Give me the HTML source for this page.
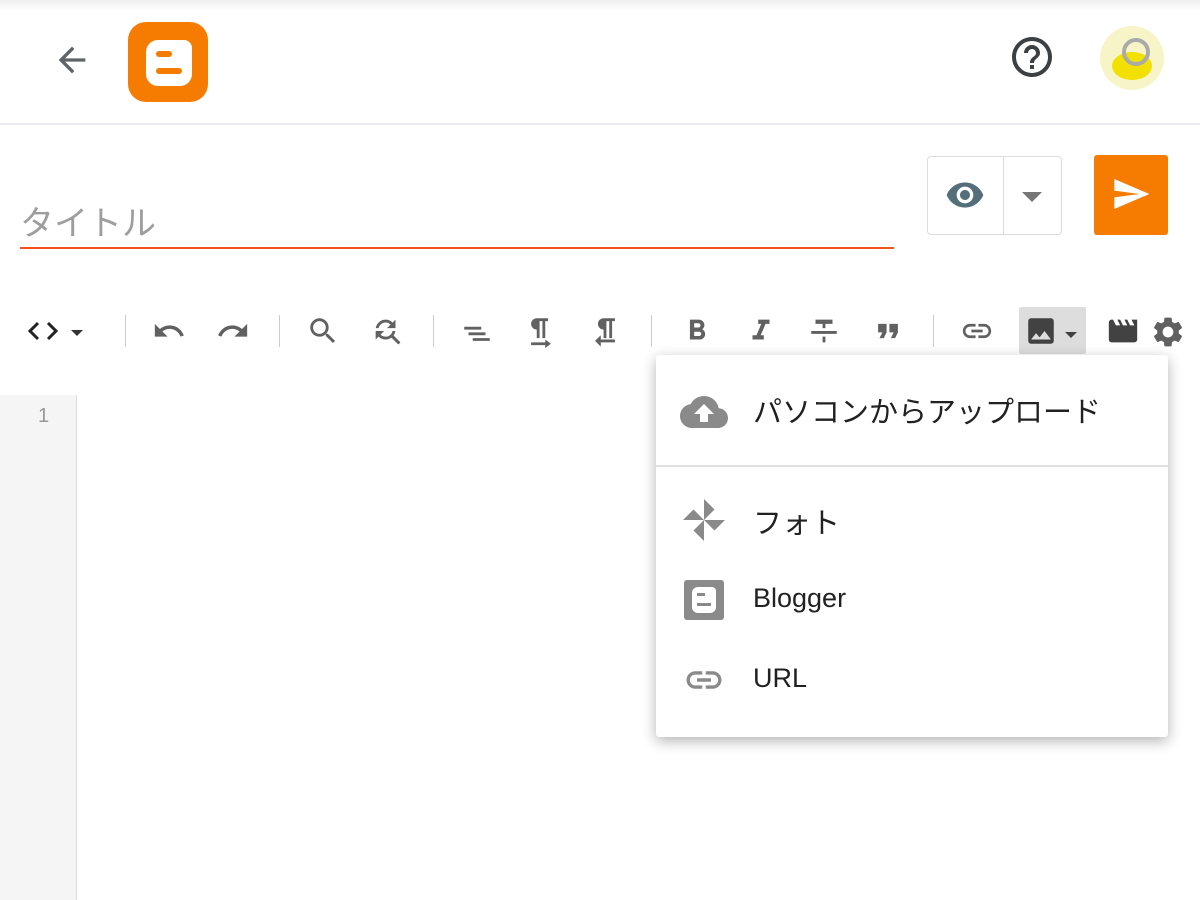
<!DOCTYPE html>
<html><head><meta charset="utf-8"><style>
*{margin:0;padding:0;box-sizing:border-box}
body{width:1200px;height:900px;overflow:hidden;background:#fff;font-family:"Liberation Sans","Noto Sans CJK JP",sans-serif;position:relative}
.a{position:absolute}
.sep{position:absolute;top:315px;width:1px;height:32px;background:#ccc}
.ic{position:absolute;top:314px}
.mi{position:absolute;left:753px;font-size:27px;color:#212121}
</style></head><body>
<div class="a" style="left:0;top:0;width:1200px;height:10px;background:linear-gradient(#eee,#fff)"></div>
<div class="a" style="left:0;top:123px;width:1200px;height:2px;background:#e8eaed"></div>
<svg class="a" style="left:52px;top:40px" width="40" height="40" viewBox="0 0 24 24"><path fill="#5f6368" d="M20 11H7.83l5.59-5.59L12 4l-8 8 8 8 1.41-1.41L7.83 13H20v-2z"/></svg>
<div class="a" style="left:128px;top:22px;width:80px;height:80px;background:#f57c00;border-radius:18px"></div>
<div class="a" style="left:146px;top:40px;width:46px;height:46px;background:#fff;border-radius:12px 8px 12px 12px"></div>
<div class="a" style="left:156px;top:51px;width:16px;height:6px;background:#f57c00;border-radius:3px"></div>
<div class="a" style="left:156px;top:68px;width:26px;height:6px;background:#f57c00;border-radius:3px"></div>
<svg class="a" style="left:1008px;top:33px" width="48" height="48" viewBox="0 0 24 24"><path fill="#3c4043" d="M11 18h2v-2h-2v2zm1-16C6.48 2 2 6.48 2 12s4.48 10 10 10 10-4.48 10-10S17.52 2 12 2zm0 18c-4.41 0-8-3.590-8-8s3.59-8 8-8 8 3.59 8 8-3.59 8-8 8zm0-14c-2.21 0-4 1.79-4 4h2c0-1.1.9-2 2-2s2 .9 2 2c0 2-3 1.75-3 5h2c0-2.250 3-2.5 3-5 0-2.21-1.79-4-4-4z"/></svg>
<div class="a" style="left:1100px;top:26px;width:64px;height:64px;border-radius:50%;background:#f7f5c8"></div>
<div class="a" style="left:1112px;top:52px;width:40px;height:28px;border-radius:50%;background:#f2e000"></div>
<div class="a" style="left:1122px;top:38px;width:28px;height:28px;border-radius:50%;border:4px solid #aaa"></div>
<div class="a" style="left:20px;top:196px;font-size:34px;color:#9e9e9e">タイトル</div>
<div class="a" style="left:20px;top:247px;width:874px;height:2px;background:#f4511e"></div>
<div class="a" style="left:927px;top:156px;width:135px;height:79px;border:1px solid #dadce0;border-radius:4px"></div>
<div class="a" style="left:1003px;top:156px;width:1px;height:79px;background:#dadce0"></div>
<svg class="a" style="left:945px;top:175px" width="40" height="40" viewBox="0 0 24 24"><path fill="#546e7a" d="M12 4.5C7 4.5 2.73 7.61 1 12c1.73 4.39 6 7.5 11 7.5s9.27-3.11 11-7.5c-1.73-4.39-6-7.5-11-7.5zM12 17c-2.76 0-5-2.24-5-5s2.24-5 5-5 5 2.24 5 5-2.24 5-5 5zm0-8c-1.66 0-3 1.34-3 3s1.34 3 3 3 3-1.34 3-3-1.34-3-3-3z"/></svg>
<svg class="a" style="left:1020px;top:190px" width="24" height="14" viewBox="0 0 24 14"><path fill="#757575" d="M2 2h20L12 12z"/></svg>
<div class="a" style="left:1094px;top:155px;width:74px;height:80px;background:#f57c00;border-radius:3px"></div>
<svg class="a" style="left:1111px;top:174px" width="40" height="40" viewBox="0 0 24 24"><path fill="#fff" d="M2.01 21L23 12 2.01 3 2 10l15 2-15 2z"/></svg>
<svg class="a" style="left:26px;top:320px" width="34" height="22" viewBox="0 0 34 22"><path fill="none" stroke="#222" stroke-width="3" d="M12 3L4 11l8 8M22 3l8 8-8 8"/></svg>
<svg class="a" style="left:70px;top:329px" width="14" height="8"><path fill="#333" d="M1 1h12L7 7z"/></svg>
<div class="sep" style="left:125px"></div><div class="sep" style="left:279px"></div><div class="sep" style="left:433px"></div><div class="sep" style="left:651px"></div><div class="sep" style="left:933px"></div>
<svg class="ic" style="left:152px" width="34" height="34" viewBox="0 0 24 24"><path fill="#616161" d="M12.5 8c-2.65 0-5.05.99-6.9 2.6L2 7v9h9l-3.62-3.62c1.39-1.16 3.16-1.88 5.12-1.88 3.54 0 6.55 2.31 7.6 5.5l2.37-.78C21.08 11.03 17.15 8 12.5 8z"/></svg>
<svg class="ic" style="left:216px" width="34" height="34" viewBox="0 0 24 24"><path fill="#616161" d="M18.4 10.6C16.55 8.99 14.15 8 11.5 8c-4.65 0-8.58 3.03-9.96 7.22L3.9 16c1.05-3.19 4.05-5.5 7.6-5.5 1.95 0 3.73.72 5.12 1.88L13 16h9V7l-3.6 3.6z"/></svg>
<svg class="ic" style="left:306px" width="34" height="34" viewBox="0 0 24 24"><path fill="#616161" d="M15.5 14h-.79l-.28-.27A6.47 6.47 0 0016 9.5 6.5 6.5 0 109.5 16c1.61 0 3.09-.59 4.23-1.57l.27.28v.79l5 4.99L20.49 19l-4.99-5zm-6 0C7.01 14 5 11.99 5 9.5S7.01 5 9.5 5 14 7.01 14 9.5 11.99 14 9.5 14z"/></svg>
<svg class="ic" style="left:370px" width="34" height="34" viewBox="0 0 24 24"><path fill="#616161" d="M11 6c1.38 0 2.63.56 3.54 1.46L12 10h6V4l-2.05 2.05A6.976 6.976 0 0011 4c-3.53 0-6.43 2.61-6.92 6H6.1A5 5 0 0111 6zm5.64 9.14A6.89 6.890 0 0017.92 12H15.9a5 5 0 01-4.9 4c-1.38 0-2.63-.56-3.54-1.46L10 12H4v6l2.05-2.05A6.976 6.976 0 0011 18c1.55 0 2.98-.51 4.14-1.36L20 21.49 21.49 20l-4.85-4.86z"/></svg>
<svg class="ic" style="left:460px" width="34" height="34" viewBox="0 0 24 24"><path fill="#616161" d="M3 9h12v2H3zM6 13h12v2H6zM9 17h12v2H9z"/></svg>
<svg class="ic" style="left:524px" width="34" height="34" viewBox="0 0 24 24"><path fill="#616161" d="M9 2v1h0C6.8 3 5 4.8 5 7s1.8 4 4 4v6h2V5h2v12h2V5h2V3H9V2zM15 18v2H5v2h10v2l4-3z"/></svg>
<svg class="ic" style="left:588px" width="34" height="34" viewBox="0 0 24 24"><path fill="#616161" d="M11 3C8.8 3 7 4.8 7 7s1.8 4 4 4v6h2V5h2v12h2V5h2V3h-8zM9 18v-3l-4 4 4 4v-3h10v-2z"/></svg>
<svg class="ic" style="left:680px" width="34" height="34" viewBox="0 0 24 24"><path fill="#616161" d="M15.6 10.79c.97-.67 1.65-1.77 1.65-2.790 0-2.26-1.75-4-4-4H7v14h7.04c2.09 0 3.710-1.7 3.71-3.79 0-1.52-.86-2.82-2.15-3.42zM10 6.5h3c.83 0 1.5.67 1.5 1.5s-.67 1.5-1.5 1.5h-3v-3zm3.5 9H10v-3h3.5c.83 0 1.5.67 1.5 1.5s-.67 1.5-1.5 1.5z"/></svg>
<svg class="ic" style="left:744px" width="34" height="34" viewBox="0 0 24 24"><path fill="#616161" d="M10 4v3h2.21l-3.42 8H6v3h8v-3h-2.21l3.42-8H18V4z"/></svg>
<svg class="ic" style="left:807px" width="34" height="34" viewBox="0 0 24 24"><path fill="#616161" d="M6 4v3h5v3h2V7h5V4zM3 12v2h18v-2zM11 16h2v4h-2z"/></svg>
<svg class="ic" style="left:871px" width="34" height="34" viewBox="0 0 24 24"><path fill="#616161" d="M6 17h3l2-4V7H5v6h3zm8 0h3l2-4V7h-6v6h3z"/></svg>
<svg class="ic" style="left:960px" width="34" height="34" viewBox="0 0 24 24"><path fill="#616161" d="M3.9 12c0-1.71 1.39-3.1 3.1-3.1h4V7H7c-2.76 0-5 2.24-5 5s2.24 5 5 5h4v-1.9H7c-1.71 0-3.1-1.39-3.1-3.1zM8 13h8v-2H8v2zm9-6h-4v1.9h4c1.71 0 3.1 1.39 3.1 3.1s-1.39 3.1-3.1 3.1h-4V17h4c2.76 0 5-2.24 5-5s-2.24-5-5-5z"/></svg>
<div class="a" style="left:1019px;top:307px;width:67px;height:47px;background:#ddd;border-radius:2px"></div>
<svg class="ic" style="left:1024px;top:314px" width="34" height="34" viewBox="0 0 24 24"><path fill="#424242" d="M21 19V5c0-1.1-.9-2-2-2H5c-1.1 0-2 .9-2 2v14c0 1.1.9 2 2 2h14c1.1 0 2-.9 2-2zM8.5 13.5l2.5 3.01L14.5 12l4.5 6H5l3.5-4.5z"/></svg>
<svg class="a" style="left:1064px;top:331px" width="14" height="8"><path fill="#424242" d="M1 1h12L7 7z"/></svg>
<svg class="ic" style="left:1106px" width="34" height="34" viewBox="0 0 24 24"><path fill="#424242" d="M18 4l2 4h-3l-2-4h-2l2 4h-3l-2-4H8l2 4H7L5 4H4c-1.1 0-2 .9-2 2v12c0 1.1.9 2 2 2h16c1.1 0 2-.9 2-2V4h-4z"/></svg>
<svg class="ic" style="left:1150px" width="36" height="36" viewBox="0 0 24 24"><path fill="#616161" d="M19.14 12.94c.04-.3.06-.61.06-.94 0-.32-.02-.64-.07-.94l2.03-1.58a.49.49 0 00.12-.61l-1.92-3.32a.488.488 0 00-.59-.22l-2.39.96c-.5-.38-1.03-.7-1.62-.94l-.36-2.54a.484.484 0 00-.48-.41h-3.84c-.24 0-.43.17-.47.41l-.36 2.54c-.59.24-1.13.57-1.62.94l-2.39-.96c-.22-.08-.47 0-.59.22L2.74 8.87c-.12.21-.08.47.12.61l2.03 1.58c-.05.3-.09.63-.09.94s.02.64.07.94l-2.03 1.58a.49.49 0 00-.12.61l1.92 3.32c.12.22.37.29.59.22l2.39-.96c.5.38 1.03.7 1.62.94l.36 2.54c.05.24.24.41.48.41h3.84c.24 0 .44-.17.47-.41l.36-2.54c.59-.24 1.13-.56 1.62-.94l2.39.96c.22.08.47 0 .59-.22l1.92-3.32c.12-.22.07-.47-.12-.61l-2.01-1.58zM12 15.6c-1.98 0-3.6-1.62-3.6-3.6s1.62-3.6 3.6-3.6 3.6 1.62 3.6 3.6-1.62 3.6-3.6 3.6z"/></svg>
<div class="a" style="left:0;top:395px;width:77px;height:505px;background:#f5f5f5;border-right:1px solid #ddd"></div>
<div class="a" style="left:38px;top:405px;font-size:20px;color:#999">1</div>
<div class="a" style="left:656px;top:355px;width:512px;height:382px;background:#fff;border-radius:3px;box-shadow:0 4px 14px rgba(0,0,0,.3)"></div>
<div class="a" style="left:656px;top:465px;width:512px;height:2px;background:#e0e0e0"></div>
<svg class="a" style="left:680px;top:388px" width="48" height="48" viewBox="0 0 24 24"><path fill="#8a8a8a" d="M19.35 10.04A7.49 7.49 0 0012 4C9.11 4 6.6 5.64 5.35 8.04A5.994 5.994 0 000 14c0 3.31 2.69 6 6 6h13c2.76 0 5-2.24 5-5 0-2.64-2.05-4.78-4.65-4.96zM14 13v4h-4v-4H7l5-5 5 5h-3z"/></svg>
<div class="mi" style="top:389px;font-size:29px">パソコンからアップロード</div>
<svg class="a" style="left:683px;top:499px" width="42" height="42" viewBox="0 0 24 24"><path fill="#8a8a8a" d="M12 12V0l6 6zM12 12H24l-6 6zM12 12v12l-6-6zM12 12H0l6-6z"/></svg>
<div class="mi" style="top:500px;font-size:29px">フォト</div>
<div class="a" style="left:684px;top:580px;width:40px;height:40px;background:#8a8a8a;border-radius:3px"></div>
<div class="a" style="left:692px;top:587px;width:24px;height:26px;background:#fff;border-radius:6px 4px 6px 6px"></div>
<div class="a" style="left:697px;top:593px;width:8px;height:3px;background:#8a8a8a"></div>
<div class="a" style="left:697px;top:603px;width:14px;height:3px;background:#8a8a8a"></div>
<div class="mi" style="top:583px">Blogger</div>
<svg class="a" style="left:683px;top:659px" width="42" height="42" viewBox="0 0 24 24"><path fill="#8a8a8a" d="M3.9 12c0-1.71 1.39-3.1 3.1-3.1h4V7H7c-2.76 0-5 2.24-5 5s2.24 5 5 5h4v-1.9H7c-1.71 0-3.1-1.39-3.1-3.1zM8 13h8v-2H8v2zm9-6h-4v1.9h4c1.71 0 3.1 1.39 3.1 3.1s-1.39 3.1-3.1 3.1h-4V17h4c2.76 0 5-2.24 5-5s-2.24-5-5-5z"/></svg>
<div class="mi" style="top:663px">URL</div>
</body></html>
